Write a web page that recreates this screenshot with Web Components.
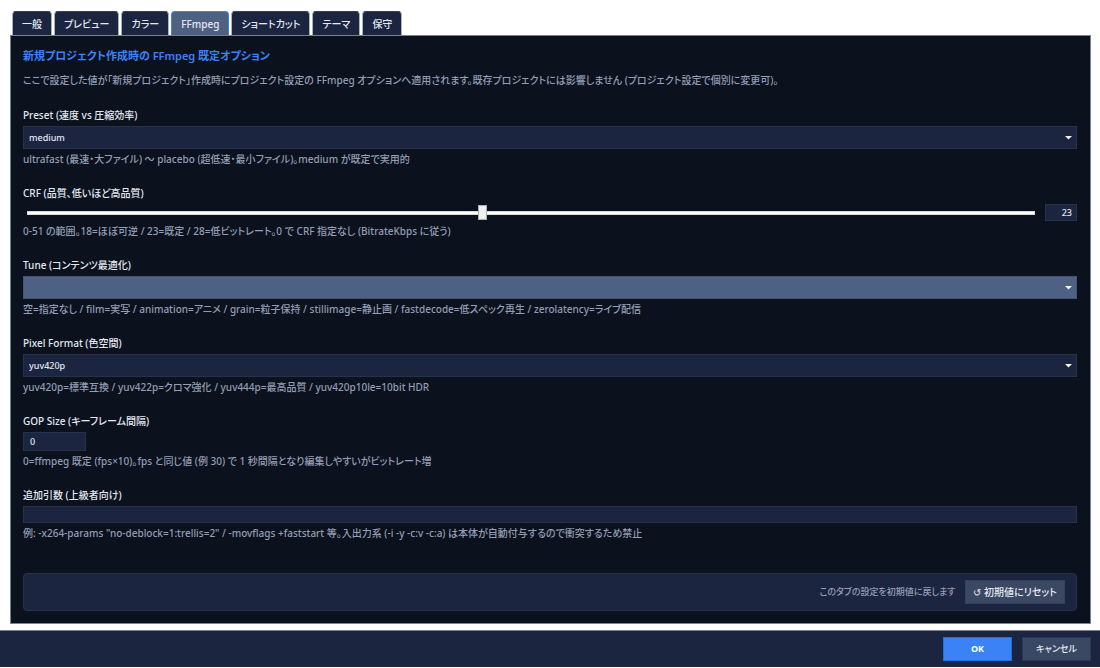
<!DOCTYPE html>
<html lang="ja">
<head>
<meta charset="utf-8">
<title>設定</title>
<style>
  :root {
    --panel: #0b121e;
    --control: #1c2540;
    --line: #26314b;
    --active: #4f6182;
    --accent: #3b82f6;
    --text: #e4e8f2;
    --muted: #949db5;
    --frame: #78818f;
  }
  body {
    margin: 0;
    background: #fff;
    color: var(--text);
    font: 500 10px/16px "Noto Sans", "Noto Sans CJK JP", sans-serif;
    font-feature-settings: "palt";
  }
</style>
</head>
<body>
<settings-window>
  <tab-bar slot="tabs" selected="FFmpeg" items="一般,プレビュー,カラー,FFmpeg,ショートカット,テーマ,保守"></tab-bar>
  <settings-panel heading="新規プロジェクト作成時の FFmpeg 既定オプション">
    <span slot="intro">ここで設定した値が「新規プロジェクト」作成時にプロジェクト設定の FFmpeg オプションへ適用されます。既存プロジェクトには影響しません (プロジェクト設定で個別に変更可)。</span>
    <select-field label="Preset (速度 vs 圧縮効率)" options="ultrafast,superfast,veryfast,faster,fast,medium,slow,slower,veryslow,placebo" value="medium">ultrafast (最速・大ファイル) ～ placebo (超低速・最小ファイル)。medium が既定で実用的</select-field>
    <slider-field label="CRF (品質、低いほど高品質)" min="0" max="51" value="23">0-51 の範囲。18=ほぼ可逆 / 23=既定 / 28=低ビットレート。0 で CRF 指定なし (BitrateKbps に従う)</slider-field>
    <select-field class="active" label="Tune (コンテンツ最適化)" options=",film,animation,grain,stillimage,fastdecode,zerolatency" value="">空=指定なし / film=実写 / animation=アニメ / grain=粒子保持 / stillimage=静止画 / fastdecode=低スペック再生 / zerolatency=ライブ配信</select-field>
    <select-field label="Pixel Format (色空間)" options="yuv420p,yuv422p,yuv444p,yuv420p10le" value="yuv420p">yuv420p=標準互換 / yuv422p=クロマ強化 / yuv444p=最高品質 / yuv420p10le=10bit HDR</select-field>
    <text-field class="short" label="GOP Size (キーフレーム間隔)" value="0">0=ffmpeg 既定 (fps×10)。fps と同じ値 (例 30) で 1 秒間隔となり編集しやすいがビットレート増</text-field>
    <text-field label="追加引数 (上級者向け)" value="">例: -x264-params "no-deblock=1:trellis=2" / -movflags +faststart 等。入出力系 (-i -y -c:v -c:a) は本体が自動付与するので衝突するため禁止</text-field>
    <reset-bar slot="footer">このタブの設定を初期値に戻します</reset-bar>
  </settings-panel>
  <dialog-actions slot="actions"></dialog-actions>
</settings-window>

<script>
class SettingsWindow extends HTMLElement {
  constructor() {
    super();
    this.attachShadow({ mode: "open" });
    this.shadowRoot.innerHTML = `
      <style>
        :host {
          display: flex;
          flex-direction: column;
          box-sizing: border-box;
          min-height: 100vh;
          padding-bottom: 1px;
        }
        main {
          flex: 1;
          display: flex;
          flex-direction: column;
          padding: 11px 9px 6px 10px;
        }
      </style>
      <main>
        <slot name="tabs"></slot>
        <slot></slot>
      </main>
      <slot name="actions"></slot>
    `;
  }
}

class TabBar extends HTMLElement {
  constructor() {
    super();
    this.attachShadow({ mode: "open" });
  }

  connectedCallback() {
    this.shadowRoot.addEventListener("click", (event) => {
      if (event.target.classList.contains("tab")) {
        this.setAttribute("selected", event.target.textContent);
        this.render();
      }
    });
    this.render();
  }

  render() {
    const selected = this.getAttribute("selected");
    const tabs = this.getAttribute("items")
      .split(",")
      .map(
        (name) => `<button class="tab" role="tab" aria-selected="${name === selected}">${name}</button>`
      )
      .join("");
    this.shadowRoot.innerHTML = `
      <style>
        :host { display: block; }
        div {
          display: flex;
          gap: 2px;
          padding-left: 2px;
        }
        .tab {
          height: 24px;
          padding: 0 9px;
          border: 1px solid #a9b0bf;
          border-top-color: #35405a;
          border-bottom: 0;
          border-radius: 4px 4px 0 0;
          background: var(--control);
          color: var(--text);
          font: inherit;
          font-feature-settings: inherit;
        }
        .tab[aria-selected="true"] {
          background: var(--active);
          border-color: var(--accent);
        }
      </style>
      <div role="tablist">${tabs}</div>
    `;
  }
}

class SettingsPanel extends HTMLElement {
  constructor() {
    super();
    this.attachShadow({ mode: "open" });
  }

  connectedCallback() {
    this.shadowRoot.innerHTML = `
      <style>
        :host {
          flex: 1;
          display: flex;
          flex-direction: column;
          padding: 12px 13px 12px 12px;
          border: 1px solid var(--frame);
          background: var(--panel);
        }
        h2 {
          margin: 0 0 8px;
          color: var(--accent);
          font-size: 11px;
          font-weight: 600;
          line-height: 16px;
        }
        p {
          margin: 0 0 19px;
          color: var(--muted);
        }
        .fields {
          display: flex;
          flex-direction: column;
          gap: 18px;
          margin-bottom: 18px;
        }
        slot[name="footer"]::slotted(*) { margin-top: auto; }
      </style>
      <h2>${this.getAttribute("heading")}</h2>
      <p><slot name="intro"></slot></p>
      <div class="fields"><slot></slot></div>
      <slot name="footer"></slot>
    `;
  }
}

// shared frame of a setting: label, control, hint
class BaseField extends HTMLElement {
  constructor() {
    super();
    this.attachShadow({ mode: "open" });
  }

  connectedCallback() {
    this.shadowRoot.innerHTML = `
      <style>
        :host { display: block; }
        label {
          display: block;
          margin-bottom: 3px;
        }
        .hint {
          margin-top: 2px;
          color: var(--muted);
        }
        input, select {
          box-sizing: border-box;
          width: 100%;
          margin: 0;
          border: 1px solid var(--line);
          border-radius: 0;
          outline: 0;
          background: var(--control);
          color: var(--text);
          font: inherit;
          font-size: 9px;
        }
        ${this.css()}
      </style>
      <label for="control">${this.getAttribute("label")}</label>
      ${this.control()}
      <div class="hint"><slot></slot></div>
    `;
  }
}

class SelectField extends BaseField {
  css() {
    return `
      .box {
        display: grid;
        align-items: center;
      }
      .box > * { grid-area: 1 / 1; }
      select {
        appearance: none;
        height: 23px;
        padding: 0 5px;
      }
      svg {
        justify-self: end;
        margin-right: 5px;
        pointer-events: none;
      }
      :host(.active) select {
        background: var(--active);
        border-color: #40557a;
      }
    `;
  }

  control() {
    const value = this.getAttribute("value");
    const options = this.getAttribute("options")
      .split(",")
      .map((o) => `<option ${o === value ? "selected" : ""}>${o}</option>`)
      .join("");
    return `
      <div class="box">
        <select id="control">${options}</select>
        <svg width="7" height="4" viewBox="0 0 7 4"><path d="M0 0h7L3.5 3.5z" fill="#f0f3fa"/></svg>
      </div>
    `;
  }
}

class SliderField extends BaseField {
  connectedCallback() {
    super.connectedCallback();
    const range = this.shadowRoot.querySelector("#control");
    const number = this.shadowRoot.querySelector(".number");
    range.addEventListener("input", () => (number.value = range.value));
    number.addEventListener("change", () => (range.value = number.value));
  }

  css() {
    return `
      .row {
        display: flex;
        align-items: center;
        gap: 10px;
      }
      input[type="range"] {
        appearance: none;
        flex: 1;
        height: 17px;
        margin-left: 4px;
        border: 0;
        background: none;
      }
      input[type="range"]::-webkit-slider-runnable-track {
        height: 4px;
        box-sizing: border-box;
        border: 1px solid #d6dadb;
        background: #fff;
      }
      input[type="range"]::-webkit-slider-thumb {
        appearance: none;
        box-sizing: border-box;
        width: 9px;
        height: 15px;
        margin-top: -7px;
        border: 1px solid #acacac;
        background: #f0f0f0;
      }
      .number {
        width: 32px;
        height: 17px;
        padding: 0 4px;
        text-align: right;
      }
    `;
  }

  control() {
    const value = this.getAttribute("value");
    return `
      <div class="row">
        <input id="control" type="range" min="${this.getAttribute("min")}" max="${this.getAttribute("max")}" value="${value}">
        <input class="number" type="text" aria-label="CRF" value="${value}">
      </div>
    `;
  }
}

class TextField extends BaseField {
  css() {
    return `
      input {
        display: block;
        height: 17px;
        padding: 0 6px;
      }
      :host(.short) input {
        width: 63px;
        height: 19px;
      }
    `;
  }

  control() {
    return `<input id="control" type="text" value="${this.getAttribute("value")}">`;
  }
}

class ResetBar extends HTMLElement {
  constructor() {
    super();
    this.attachShadow({ mode: "open" });
    this.shadowRoot.innerHTML = `
      <style>
        :host {
          display: flex;
          align-items: center;
          justify-content: flex-end;
          gap: 10px;
          padding: 6px 11px;
          border: 1px solid var(--line);
          border-radius: 4px;
          background: var(--control);
          color: var(--muted);
          font-size: 9px;
        }
        button {
          height: 24px;
          padding: 0 7px;
          border: 1px solid #34415c;
          background: #3a4863;
          color: var(--text);
          font: inherit;
          font-size: 10px;
          font-feature-settings: inherit;
        }
      </style>
      <span><slot></slot></span>
      <button>↺ 初期値にリセット</button>
    `;
  }
}

class DialogActions extends HTMLElement {
  constructor() {
    super();
    this.attachShadow({ mode: "open" });
    this.shadowRoot.innerHTML = `
      <style>
        :host {
          display: flex;
          justify-content: flex-end;
          gap: 10px;
          padding: 6px 9px;
          border-top: 1px solid var(--frame);
          background: var(--control);
        }
        button {
          width: 69px;
          height: 24px;
          padding: 0;
          border: 1px solid #2b3853;
          background: #3a4863;
          color: var(--text);
          font: inherit;
          font-size: 9px;
          font-feature-settings: inherit;
        }
        .ok {
          border-color: #1a73d8;
          background: var(--accent);
          color: #fff;
          font-weight: 700;
        }
      </style>
      <button class="ok">OK</button>
      <button>キャンセル</button>
    `;
  }
}

customElements.define("settings-window", SettingsWindow);
customElements.define("tab-bar", TabBar);
customElements.define("settings-panel", SettingsPanel);
customElements.define("select-field", SelectField);
customElements.define("slider-field", SliderField);
customElements.define("text-field", TextField);
customElements.define("reset-bar", ResetBar);
customElements.define("dialog-actions", DialogActions);
</script>
</body>
</html>
